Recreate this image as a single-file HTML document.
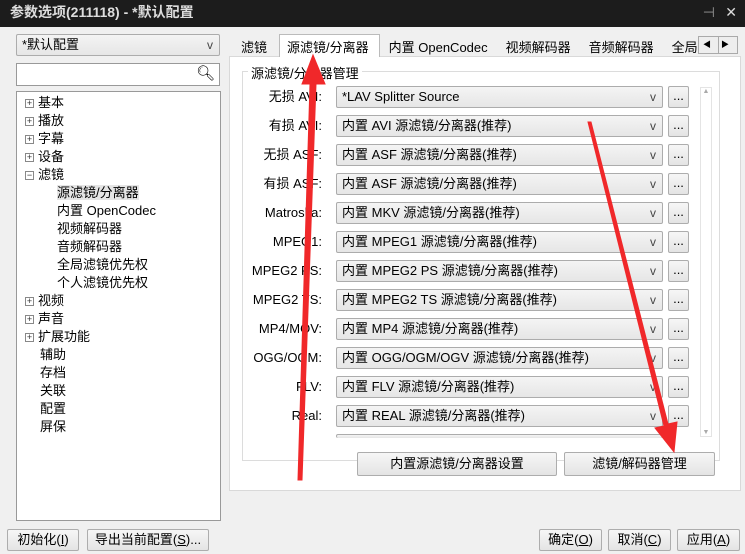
<!DOCTYPE html><html><head><meta charset="utf-8"><style>
*{box-sizing:border-box;margin:0;padding:0}
body{width:745px;height:554px;background:#f0f0f0;font:12px "Liberation Sans","Noto Sans CJK SC",sans-serif;color:#000;position:relative;overflow:hidden}
.a{position:absolute}
.btn{position:absolute;border:1px solid #adadad;background:linear-gradient(#f6f6f6,#e4e4e4);border-radius:2px;text-align:center;font-size:13px}
.cb{position:absolute;border:1px solid #acacac;background:linear-gradient(#f4f4f4,#e6e6e6);border-radius:2px;height:22px;line-height:20px;padding-left:5px;font-size:13px}
.cb:after{content:"v";position:absolute;right:6px;top:0;font-size:12px;color:#444}
.lb{position:absolute;width:90px;text-align:right;left:232px;font-size:13px;height:22px;line-height:22px}
.tree div{height:18px;line-height:18px;font-size:13px;position:relative}
.pl{display:inline-block;width:9px;height:9px;border:1px solid #888;font-size:9px;line-height:7px;text-align:center;margin:0 4px 0 8px;vertical-align:middle;background:#fff;color:#333}
</style></head><body>
<div class="a" style="left:0;top:0;width:745px;height:27px;background:#1c1c1c;color:#ddd;font-size:14px;line-height:24px;padding-left:10px;font-weight:bold">参数选项(211118) - *默认配置<span style="position:absolute;right:30px;font-weight:normal;color:#999">⊣</span><span style="position:absolute;right:8px;font-weight:normal">✕</span></div>
<div class="cb" style="left:16px;top:34px;width:204px">*默认配置</div>
<div class="a" style="left:16px;top:63px;width:204px;height:23px;border:1px solid #999;background:#fff"><span style="position:absolute;right:4px;top:0;font-size:15px">🔍︎</span></div>
<div class="a tree" style="left:16px;top:91px;width:205px;height:430px;border:1px solid #999;background:#fff;padding-top:2px">
<div><span class="pl">+</span>基本</div><div><span class="pl">+</span>播放</div><div><span class="pl">+</span>字幕</div><div><span class="pl">+</span>设备</div><div><span class="pl">−</span>滤镜</div>
<div style="padding-left:40px"><span style="background:#e5e5e5">源滤镜/分离器</span></div>
<div style="padding-left:40px">内置 OpenCodec</div><div style="padding-left:40px">视频解码器</div><div style="padding-left:40px">音频解码器</div><div style="padding-left:40px">全局滤镜优先权</div><div style="padding-left:40px">个人滤镜优先权</div>
<div><span class="pl">+</span>视频</div><div><span class="pl">+</span>声音</div><div><span class="pl">+</span>扩展功能</div>
<div style="padding-left:23px">辅助</div><div style="padding-left:23px">存档</div><div style="padding-left:23px">关联</div><div style="padding-left:23px">配置</div><div style="padding-left:23px">屏保</div>
</div>
<div class="a" style="left:229px;top:56px;width:512px;height:435px;border:1px solid #d9d9d9;background:#fff"></div>
<div class="a" style="left:279px;top:34px;width:101px;height:23px;border:1px solid #bbb;border-bottom:none;background:#fff"></div>
<div class="a" style="top:37px;left:241px;font-size:13px;white-space:nowrap">滤镜<span style="margin-left:20px">源滤镜/分离器</span><span style="margin-left:20px">内置 OpenCodec</span><span style="margin-left:18px">视频解码器</span><span style="margin-left:18px">音频解码器</span><span style="margin-left:18px">全局滤</span></div>
<div class="a" style="left:698px;top:36px;width:40px;height:18px;border:1px solid #aaa;background:#eee;font-size:8px;line-height:16px"><span style="position:absolute;left:4px">◀</span><span style="position:absolute;left:22px">▶</span><span style="position:absolute;left:19px;top:0;height:16px;border-left:1px solid #aaa"></span></div>
<div class="a" style="left:242px;top:71px;width:478px;height:390px;border:1px solid #dcdcdc"></div>
<div class="a" style="left:248px;top:63px;background:#fff;padding:0 3px;font-size:13px">源滤镜/分离器管理</div>
<div class="a" style="left:700px;top:87px;width:12px;height:350px;border:1px solid #e4e4e4;background:#fff;font-size:7px;color:#aaa;text-align:center">▲<div style="position:absolute;bottom:0;width:10px">▼</div></div>
<div id="rows"></div>
<script>
var L=["无损 AVI:","有损 AVI:","无损 ASF:","有损 ASF:","Matroska:","MPEG1:","MPEG2 PS:","MPEG2 TS:","MP4/MOV:","OGG/OGM:","FLV:","Real:"];
var V=["*LAV Splitter Source","内置 AVI 源滤镜/分离器(推荐)","内置 ASF 源滤镜/分离器(推荐)","内置 ASF 源滤镜/分离器(推荐)","内置 MKV 源滤镜/分离器(推荐)","内置 MPEG1 源滤镜/分离器(推荐)","内置 MPEG2 PS 源滤镜/分离器(推荐)","内置 MPEG2 TS 源滤镜/分离器(推荐)","内置 MP4 源滤镜/分离器(推荐)","内置 OGG/OGM/OGV 源滤镜/分离器(推荐)","内置 FLV 源滤镜/分离器(推荐)","内置 REAL 源滤镜/分离器(推荐)"];
var h="";for(var i=0;i<12;i++){var y=86+i*29;h+='<div class="lb" style="top:'+y+'px">'+L[i]+'</div><div class="cb" style="left:336px;top:'+y+'px;width:327px">'+V[i]+'</div><div class="btn" style="left:668px;top:'+y+'px;width:21px;height:22px;line-height:18px">...</div>';}
h+='<div class="cb" style="left:336px;top:434px;width:327px;height:4px;border-bottom:none"></div>';
document.getElementById("rows").innerHTML=h;
</script>
<div class="a" style="left:334px;top:438px;width:370px;height:12px;background:#fff"></div>
<div class="btn" style="left:357px;top:452px;width:200px;height:24px;line-height:22px">内置源滤镜/分离器设置</div>
<div class="btn" style="left:564px;top:452px;width:151px;height:24px;line-height:22px">滤镜/解码器管理</div>
<div class="btn" style="left:7px;top:529px;width:72px;height:22px;line-height:20px">初始化(<u>I</u>)</div>
<div class="btn" style="left:87px;top:529px;width:122px;height:22px;line-height:20px">导出当前配置(<u>S</u>)...</div>
<div class="btn" style="left:539px;top:529px;width:63px;height:22px;line-height:20px">确定(<u>O</u>)</div>
<div class="btn" style="left:608px;top:529px;width:63px;height:22px;line-height:20px">取消(<u>C</u>)</div>
<div class="btn" style="left:677px;top:529px;width:63px;height:22px;line-height:20px">应用(<u>A</u>)</div>
<svg class="a" style="left:0;top:0" width="745" height="554"><g fill="#f0282a" stroke="#f0282a">
<polygon points="298,480 302,480 316,84 325,84 313,55 302,84 310,84" stroke-width="1"/>
<polygon points="588,122 591,122 668,424 677,422 674,452 655,428 664,426" stroke-width="1"/></g></svg>
</body></html>
